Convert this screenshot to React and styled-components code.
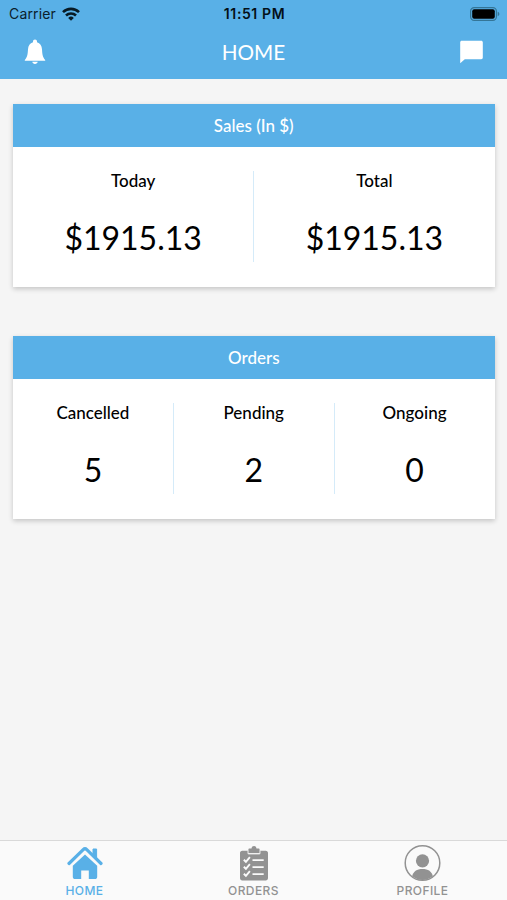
import React from "react";
import styled, { createGlobalStyle } from "styled-components";

const GlobalStyle = createGlobalStyle`
  * {
    box-sizing: border-box;
  }

  body {
    margin: 0;
    background: #f5f5f5;
    font-family: Lato, "Liberation Sans", sans-serif;
  }
`;

const Screen = styled.div`
  display: flex;
  flex-direction: column;
  height: 900px;
  background: #f5f5f5;
`;

const Header = styled.header`
  height: 79px;
  background: #59b0e7;
`;

const StatusBar = styled.div`
  display: grid;
  grid-template-columns: 1fr auto 1fr;
  align-items: center;
  height: 27px;
  padding: 0 7px 0 9px;
  font-family: Inter, sans-serif;
  font-size: 14px;
  color: #0b202c;
`;

const Carrier = styled.div`
  display: flex;
  align-items: center;
  gap: 6px;
  letter-spacing: 0.15px;
`;

const Clock = styled.div`
  font-size: 14px;
  font-weight: 600;
  letter-spacing: 0.6px;
  color: #041019;
`;

const Battery = styled.div`
  display: flex;
  justify-content: flex-end;
`;

const NavBar = styled.div`
  display: grid;
  grid-template-columns: 24px 1fr 24px;
  align-items: center;
  height: 50px;
  padding: 0 23px;
`;

const NavTitle = styled.h1`
  margin: 0;
  font-size: 20.7px;
  font-weight: 400;
  line-height: 26px;
  text-align: center;
  color: #fff;
`;

const Content = styled.main`
  flex: 1;
  display: flex;
  flex-direction: column;
  gap: 49px;
  padding: 24.5px 12.5px 0 13px;
`;

const Card = styled.section`
  height: 183px;
  background: #fff;
  box-shadow: 0 2px 5px rgba(0, 0, 0, 0.2);
`;

const CardTitle = styled.h2`
  margin: 0;
  height: 43px;
  font-size: 17px;
  font-weight: 500;
  line-height: 43px;
  text-align: center;
  color: #fff;
  background: #59b0e7;
`;

const Stats = styled.div`
  display: flex;
  padding: 24.5px 0 24px;
`;

const Stat = styled.div`
  flex: 1;
  height: 91px;
  text-align: center;
  color: #000;

  &:not(:last-child) {
    border-right: 1px solid #d5ebf9;
  }
`;

const StatLabel = styled.div`
  font-size: 17px;
  font-weight: 500;
  line-height: 20px;
`;

const StatValue = styled.div`
  margin-top: 27px;
  font-size: 32px;
  line-height: 40px;
`;

const TabBar = styled.nav`
  display: flex;
  height: 60px;
  border-top: 1px solid #d9d9d9;
  background: #fafafa;
`;

const Tab = styled.div`
  flex: 1;
  display: flex;
  flex-direction: column;
  align-items: center;
  padding-top: 3px;
  font-family: Inter, sans-serif;
  color: ${({ $active }) => ($active ? "#59b0e7" : "#929292")};
`;

const TabLabel = styled.span`
  margin-top: 2px;
  font-size: 12px;
  font-weight: 500;
  line-height: 15px;
  letter-spacing: 0.4px;
`;

const WifiIcon = () => (
  <svg width="18" height="14" viewBox="0 0 18 14" fill="none" stroke="#071a25" strokeWidth="2.6">
    <path d="M1 5.1a11.500 11.500 0 0 1 16 0" />
    <path d="M4 8.500a7.200 7.200 0 0 1 10 0" />
    <path d="M6.200 10.900a4.100 4.100 0 0 1 5.600 0L9 13.800z" fill="#071a25" stroke="none" />
  </svg>
);

const BatteryIcon = () => (
  <svg width="30" height="14" viewBox="0 0 30 14">
    <rect x="0.6" y="0.6" width="25.8" height="12.8" rx="3.6" fill="none" stroke="#347597" strokeWidth="1.2" />
    <rect x="2.2" y="2.2" width="22.6" height="9.6" rx="2" fill="#000" />
    <path d="M27.7 4.8c2.2.7 2.2 3.7 0 4.4z" fill="#347597" />
  </svg>
);

const BellIcon = () => (
  <svg width="24" height="26" viewBox="0 0 24 26" fill="#fff">
    <path d="M12 0.600c1.200 0 2 .9 2 2v.7c3.100.9 4.800 3.500 5 7 .3 5.200.7 7.900 3.200 10.800v.6H1.800v-.6C4.300 18.200 4.700 15.500 5 10.300c.2-3.500 1.900-6.100 5-7v-.7c0-1.100.8-2 2-2z" />
    <path d="M9.300 22.700h5.400c-.2 1.400-1.300 2.200-2.700 2.200s-2.500-.8-2.700-2.200z" />
  </svg>
);

const ChatIcon = () => (
  <svg width="24" height="24" viewBox="0 0 24 24" fill="#fff">
    <path d="M1.800.7h19.400c.9 0 1.600.7 1.600 1.600v15.300c0 .9-.7 1.600-1.600 1.600H4.800L.2 23.200V2.300C.2 1.400.9.7 1.800.7z" />
  </svg>
);

const HomeIcon = () => (
  <svg width="36" height="36" viewBox="0 0 36 36" fill="currentColor">
    <path d="M2 18.500 16.200 4.600a2.600 2.600 0 0 1 3.600 0L34 18.500" fill="none" stroke="currentColor" strokeWidth="3.200" strokeLinecap="round" />
    <path d="M26 4h3.600v10.200L26 10.700z" stroke="currentColor" strokeWidth="1" strokeLinejoin="round" />
    <path d="M18 9.400 30.200 20.800v10.900c0 1.400-.9 2.300-2.300 2.300h-6.100v-8.600h-7.600V34H8.100c-1.400 0-2.300-.9-2.300-2.300V20.800z" />
  </svg>
);

const OrdersIcon = () => (
  <svg width="36" height="36" viewBox="0 0 36 36" fill="currentColor">
    <path d="M6.300 5.800h6v3.500h11.400V5.800h6c1.400 0 2.300.9 2.300 2.300v25c0 1.400-.9 2.300-2.300 2.300H6.300C4.900 35.400 4 34.500 4 33.100v-25c0-1.400.9-2.300 2.300-2.300z" />
    <path d="M13.500 3.400h2C15.700.1 20.300.1 20.500 3.400h2c.7 0 1.100.5 1.100 1.100v3.700H12.400V4.500c0-.6.400-1.100 1.100-1.100z" />
    <path d="M11.900 5.500v3.200h12.200V5.500" fill="none" stroke="#fafafa" strokeWidth=".7" />
    <g fill="none" stroke="#fafafa" strokeWidth="1.900">
      <path d="m7.800 14.800 2.100 2 4-4.600M7.800 21.800l2.100 2 4-4.600M7.800 28.800l2.100 2 4-4.600" />
      <path d="M16.500 15.100h11.200M16.500 22.100h11.200M16.500 29.100h11.200" />
    </g>
  </svg>
);

const ProfileIcon = () => (
  <svg width="38" height="38" viewBox="0 0 38 38" fill="currentColor">
    <circle cx="18.500" cy="19" r="17.300" fill="none" stroke="currentColor" strokeWidth="1.500" />
    <circle cx="18.500" cy="16.800" r="6.600" />
    <path d="M8.200 32.200c.8-4.800 4.700-7.300 10.300-7.300s9.500 2.500 10.300 7.300A17 17 0 0 1 18.500 36a17 17 0 0 1-10.300-3.800z" />
  </svg>
);

const IconSlot = styled.div`
  display: flex;
  align-items: center;
  justify-content: center;
  height: 37px;
`;

const sales = [
  { label: "Today", value: "$1915.13" },
  { label: "Total", value: "$1915.13" },
];

const orders = [
  { label: "Cancelled", value: "5" },
  { label: "Pending", value: "2" },
  { label: "Ongoing", value: "0" },
];

const tabs = [
  { label: "HOME", icon: HomeIcon, active: true },
  { label: "ORDERS", icon: OrdersIcon },
  { label: "PROFILE", icon: ProfileIcon },
];

const StatCard = ({ title, items }) => (
  <Card>
    <CardTitle>{title}</CardTitle>
    <Stats>
      {items.map((item) => (
        <Stat key={item.label}>
          <StatLabel>{item.label}</StatLabel>
          <StatValue>{item.value}</StatValue>
        </Stat>
      ))}
    </Stats>
  </Card>
);

const App = () => {
  return (
    <Screen>
      <GlobalStyle />
      <Header>
        <StatusBar>
          <Carrier>
            Carrier
            <WifiIcon />
          </Carrier>
          <Clock>11:51 PM</Clock>
          <Battery>
            <BatteryIcon />
          </Battery>
        </StatusBar>
        <NavBar>
          <BellIcon />
          <NavTitle>HOME</NavTitle>
          <ChatIcon />
        </NavBar>
      </Header>

      <Content>
        <StatCard title="Sales (In $)" items={sales} />
        <StatCard title="Orders" items={orders} />
      </Content>

      <TabBar>
        {tabs.map(({ label, icon: Icon, active }) => (
          <Tab key={label} $active={active}>
            <IconSlot>
              <Icon />
            </IconSlot>
            <TabLabel>{label}</TabLabel>
          </Tab>
        ))}
      </TabBar>
    </Screen>
  );
};

export default App;
